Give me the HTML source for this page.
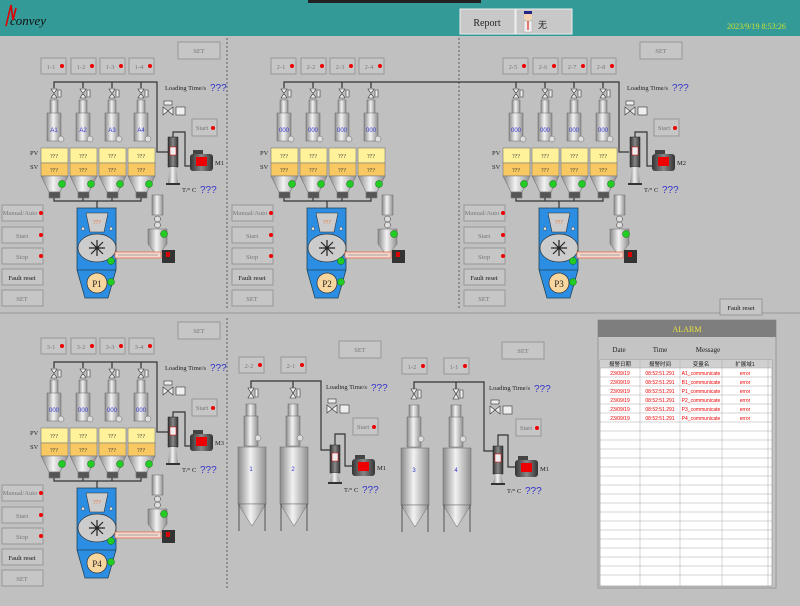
<!DOCTYPE html>
<html><head><meta charset="utf-8"><style>
html,body{margin:0;padding:0;width:800px;height:606px;overflow:hidden;background:#c0c0c0}
svg{display:block}
text{font-family:"Liberation Serif","WenQuanYi Zen Hei",serif}
.b{fill:#c6c6c6;stroke:#8c8c8c;stroke-width:.8}
.bt{font-size:6.5px;fill:#777;text-anchor:middle}
.bk{font-size:6.5px;fill:#111;text-anchor:middle}
.q{font-size:6px;fill:#333;text-anchor:middle}
.qb{font-size:10px;fill:#33c;font-family:"Liberation Sans",sans-serif}
.lbl{font-size:6.5px;fill:#222}
.p{fill:none;stroke:#333;stroke-width:1.2}
.rd{fill:#e00}
.gd{fill:#2c2;stroke:#161;stroke-width:.5}
.gl{fill:url(#g);stroke:#666;stroke-width:.5}
.vl{fill:#eee;stroke:#333;stroke-width:.6}
.ld{font-size:6px;fill:#33c;text-anchor:middle;font-family:"Liberation Sans",sans-serif}
.al{font-size:5px;fill:#e00;text-anchor:middle;font-family:"Liberation Sans Narrow","Liberation Sans",sans-serif}
.ah{font-size:5.5px;fill:#222;text-anchor:middle;font-family:"WenQuanYi Zen Hei",sans-serif}
</style></head><body>
<svg width="800" height="606" viewBox="0 0 800 606" xmlns="http://www.w3.org/2000/svg">
<defs>
<linearGradient id="g" x1="0" x2="1"><stop offset="0" stop-color="#8a8a8a"/><stop offset=".45" stop-color="#f2f2f2"/><stop offset="1" stop-color="#909090"/></linearGradient>
<linearGradient id="gm" x1="0" x2="1"><stop offset="0" stop-color="#333"/><stop offset=".5" stop-color="#888"/><stop offset="1" stop-color="#333"/></linearGradient>
</defs>
<rect width="800" height="606" fill="#c0c0c0"/>
<rect width="800" height="36" fill="#339a98"/>
<rect x="308" y="0" width="173" height="3" fill="#222"/>
<text x="10" y="25" font-size="13" fill="#111" font-family="Liberation Sans,sans-serif" font-style="italic">convey</text>
<path d="M6 26 L11 5 L13 20 L16 8" stroke="#d00" stroke-width="1.6" fill="none"/>
<rect x="460" y="9" width="55" height="25" fill="#c8c8c8" stroke="#eee"/>
<text x="487" y="26" font-size="10" text-anchor="middle" font-family="Liberation Sans,sans-serif" fill="#222">Report</text>
<rect x="516" y="9" width="56" height="25" fill="#c8c8c8" stroke="#eee"/>
<circle cx="528" cy="17" r="4" fill="#f4d4b0"/><rect x="524" y="11" width="8" height="3" fill="#228"/>
<rect x="524" y="21" width="8" height="11" fill="#eee" stroke="#aaa" stroke-width=".5"/><rect x="527.5" y="21" width="1" height="9" fill="#d00"/>
<text x="538" y="28" font-size="9" font-family="WenQuanYi Zen Hei,sans-serif" fill="#222">无</text>
<text x="727" y="29" font-size="8" fill="#cde030" font-family="Liberation Sans,sans-serif">2023/9/19  8:53:26</text>
<path d="M227 38V310M459 38V310M227 318V590" stroke="#444" stroke-width=".8" stroke-dasharray="2,2"/>
<path d="M0 313H800" stroke="#999"/>
<rect class="b" x="720" y="299" width="42" height="16"/><text class="bk" x="741" y="310">Fault reset</text>

<!-- ===== PANEL 1 ===== -->
<g>
<rect class="b" x="178" y="42" width="42" height="17"/><text class="bt" x="199" y="53">SET</text>
<rect class="b" x="41" y="58" width="25" height="16"/><text class="bt" x="51" y="69">1-1</text><circle class="rd" cx="62" cy="66" r="2"/>
<rect class="b" x="71" y="58" width="25" height="16"/><text class="bt" x="81" y="69">1-2</text><circle class="rd" cx="92" cy="66" r="2"/>
<rect class="b" x="100" y="58" width="25" height="16"/><text class="bt" x="110" y="69">1-3</text><circle class="rd" cx="121" cy="66" r="2"/>
<rect class="b" x="129" y="58" width="25" height="16"/><text class="bt" x="139" y="69">1-4</text><circle class="rd" cx="150" cy="66" r="2"/>
<path class="p" d="M54 88V82H157V152H168M83 88V82M112 88V82M141 88V82"/>
<path class="p" d="M173 137V132H185V166H190"/>
<path class="vl" d="M51 89L57 89L51 98L57 98Z M80 89L86 89L80 98L86 98Z M109 89L115 89L109 98L115 98Z M138 89L144 89L138 98L144 98Z"/>
<path class="vl" d="M58 90h3v7h-3z M87 90h3v7h-3z M116 90h3v7h-3z M145 90h3v7h-3z"/>
<rect class="gl" x="50" y="100" width="8" height="14"/><rect class="gl" x="47" y="113" width="14" height="28"/><circle cx="61" cy="139" r="3" fill="#ddd" stroke="#666" stroke-width=".5"/>
<rect class="gl" x="79" y="100" width="8" height="14"/><rect class="gl" x="76" y="113" width="14" height="28"/><circle cx="90" cy="139" r="3" fill="#ddd" stroke="#666" stroke-width=".5"/>
<rect class="gl" x="108" y="100" width="8" height="14"/><rect class="gl" x="105" y="113" width="14" height="28"/><circle cx="119" cy="139" r="3" fill="#ddd" stroke="#666" stroke-width=".5"/>
<rect class="gl" x="137" y="100" width="8" height="14"/><rect class="gl" x="134" y="113" width="14" height="28"/><circle cx="148" cy="139" r="3" fill="#ddd" stroke="#666" stroke-width=".5"/>
<text class="ld" x="54" y="132">A1</text><text class="ld" x="83" y="132">A2</text><text class="ld" x="112" y="132">A3</text><text class="ld" x="141" y="132">A4</text>
<g stroke="#777" stroke-width=".6">
<rect x="41" y="148" width="27" height="15" fill="#fff29a"/><rect x="41" y="163" width="27" height="13" fill="#f8c862"/><path d="M41 176H68L60 192H49Z" fill="url(#g)"/><rect x="49" y="192" width="11" height="6" fill="#555"/>
<rect x="70" y="148" width="27" height="15" fill="#fff29a"/><rect x="70" y="163" width="27" height="13" fill="#f8c862"/><path d="M70 176H97L89 192H78Z" fill="url(#g)"/><rect x="78" y="192" width="11" height="6" fill="#555"/>
<rect x="99" y="148" width="27" height="15" fill="#fff29a"/><rect x="99" y="163" width="27" height="13" fill="#f8c862"/><path d="M99 176H126L118 192H107Z" fill="url(#g)"/><rect x="107" y="192" width="11" height="6" fill="#555"/>
<rect x="128" y="148" width="27" height="15" fill="#fff29a"/><rect x="128" y="163" width="27" height="13" fill="#f8c862"/><path d="M128 176H155L147 192H136Z" fill="url(#g)"/><rect x="136" y="192" width="11" height="6" fill="#555"/>
</g>
<text x="54" y="158" class="q">???</text><text x="54" y="172" class="q">???</text><text x="83" y="158" class="q">???</text><text x="83" y="172" class="q">???</text><text x="112" y="158" class="q">???</text><text x="112" y="172" class="q">???</text><text x="141" y="158" class="q">???</text><text x="141" y="172" class="q">???</text>
<circle class="gd" cx="62" cy="184" r="3.5"/><circle class="gd" cx="91" cy="184" r="3.5"/><circle class="gd" cx="120" cy="184" r="3.5"/><circle class="gd" cx="149" cy="184" r="3.5"/>
<text class="lbl" x="30" y="155">PV</text><text class="lbl" x="30" y="169">SV</text>
<path class="p" d="M54 198V201H141V198M83 201V198M112 201V198M97 201V208"/>
<path d="M77 208H116V270L108 298H85L77 270Z" fill="#2b8ee2" stroke="#245" stroke-width=".8"/>
<path d="M77 270H116" stroke="#245" stroke-width=".8"/>
<path d="M86 213H108L104 232H90Z" fill="#ccc" stroke="#333" stroke-width=".6"/>
<text x="97" y="224" font-size="6" fill="#e87030" text-anchor="middle">???</text>
<path d="M83 226l2 4h-4z M111 226l2 4h-4z" fill="#eee" stroke="#333" stroke-width=".4"/>
<ellipse cx="97" cy="248" rx="19" ry="14" fill="#ccc" stroke="#333" stroke-width=".7"/>
<path d="M97 240V256M89 248H105M91 242L103 254M103 242L91 254" stroke="#222" stroke-width="1.2"/>
<circle cx="97" cy="283" r="10" fill="#f8d6a0" stroke="#333" stroke-width=".7"/>
<text x="97" y="287" font-size="9" text-anchor="middle" fill="#222">P1</text>
<circle class="gd" cx="111" cy="261" r="3.5"/><circle class="gd" cx="111" cy="282" r="3.5"/>
<rect class="gl" x="152" y="195" width="11" height="20"/>
<circle cx="157.5" cy="219" r="3" fill="#ddd" stroke="#333" stroke-width=".5"/><circle cx="157.5" cy="225" r="3" fill="#ddd" stroke="#333" stroke-width=".5"/>
<path class="gl" d="M148 229H167V244L157.5 256L148 244Z"/>
<circle class="gd" cx="164" cy="234" r="3.5"/>
<rect x="115" y="252" width="46" height="6" fill="#f4d8d0" stroke="#e07050" stroke-width=".8"/><path d="M118 255H158" stroke="#666" stroke-width=".6"/>
<rect x="162" y="250" width="13" height="13" fill="#333"/><rect x="166" y="252" width="4" height="5" fill="#d00"/>
<text class="lbl" x="165" y="90">Loading Time/s</text><text class="qb" x="210" y="91">???</text>
<path class="vl" d="M163 107L173 115V107L163 115Z"/><rect class="vl" x="164" y="101" width="8" height="4"/><rect class="vl" x="176" y="107" width="9" height="8"/>
<rect class="b" x="192" y="119" width="25" height="17"/><text class="bt" x="202" y="130">Start</text><circle class="rd" cx="213" cy="128" r="2"/>
<rect x="168" y="137" width="10" height="30" fill="url(#gm)" stroke="#222" stroke-width=".5"/><rect x="170" y="147" width="6" height="8" fill="#eee" stroke="#d00" stroke-width=".5"/>
<path d="M170 167H176L178 183H168Z" fill="url(#g)"/><rect x="166" y="183" width="14" height="2" fill="#333"/>
<rect x="190" y="154" width="23" height="17" rx="3" fill="url(#gm)"/><rect x="196" y="157" width="11" height="9" fill="#e00"/><rect x="193" y="150" width="10" height="4" fill="#444"/>
<text class="lbl" x="215" y="165" font-size="7">M1</text>
<text class="lbl" x="182" y="192">T/° C</text><text class="qb" x="200" y="193">???</text>
<rect class="b" x="2" y="205" width="41" height="16"/><text class="bt" x="20" y="215">Manual/Auto</text><circle class="rd" cx="41" cy="213" r="2"/>
<rect class="b" x="2" y="227" width="41" height="16"/><text class="bt" x="22" y="238">Start</text><circle class="rd" cx="41" cy="235" r="2"/>
<rect class="b" x="2" y="248" width="41" height="16"/><text class="bt" x="22" y="259">Stop</text><circle class="rd" cx="41" cy="256" r="2"/>
<rect class="b" x="2" y="269" width="41" height="16"/><text class="bk" x="22" y="280">Fault reset</text>
<rect class="b" x="2" y="290" width="41" height="16"/><text class="bt" x="22" y="301">SET</text>
</g>

<!-- ===== PANEL 4 ===== -->
<g transform="translate(0,280)">
<rect class="b" x="178" y="42" width="42" height="17"/><text class="bt" x="199" y="53">SET</text>
<rect class="b" x="41" y="58" width="25" height="16"/><text class="bt" x="51" y="69">3-1</text><circle class="rd" cx="62" cy="66" r="2"/>
<rect class="b" x="71" y="58" width="25" height="16"/><text class="bt" x="81" y="69">3-2</text><circle class="rd" cx="92" cy="66" r="2"/>
<rect class="b" x="100" y="58" width="25" height="16"/><text class="bt" x="110" y="69">3-3</text><circle class="rd" cx="121" cy="66" r="2"/>
<rect class="b" x="129" y="58" width="25" height="16"/><text class="bt" x="139" y="69">3-4</text><circle class="rd" cx="150" cy="66" r="2"/>
<path class="p" d="M54 88V82H157V152H168M83 88V82M112 88V82M141 88V82"/>
<path class="p" d="M173 137V132H185V166H190"/>
<path class="vl" d="M51 89L57 89L51 98L57 98Z M80 89L86 89L80 98L86 98Z M109 89L115 89L109 98L115 98Z M138 89L144 89L138 98L144 98Z"/>
<path class="vl" d="M58 90h3v7h-3z M87 90h3v7h-3z M116 90h3v7h-3z M145 90h3v7h-3z"/>
<rect class="gl" x="50" y="100" width="8" height="14"/><rect class="gl" x="47" y="113" width="14" height="28"/><circle cx="61" cy="139" r="3" fill="#ddd" stroke="#666" stroke-width=".5"/>
<rect class="gl" x="79" y="100" width="8" height="14"/><rect class="gl" x="76" y="113" width="14" height="28"/><circle cx="90" cy="139" r="3" fill="#ddd" stroke="#666" stroke-width=".5"/>
<rect class="gl" x="108" y="100" width="8" height="14"/><rect class="gl" x="105" y="113" width="14" height="28"/><circle cx="119" cy="139" r="3" fill="#ddd" stroke="#666" stroke-width=".5"/>
<rect class="gl" x="137" y="100" width="8" height="14"/><rect class="gl" x="134" y="113" width="14" height="28"/><circle cx="148" cy="139" r="3" fill="#ddd" stroke="#666" stroke-width=".5"/>
<text class="ld" x="54" y="132">000</text><text class="ld" x="83" y="132">000</text><text class="ld" x="112" y="132">000</text><text class="ld" x="141" y="132">000</text>
<g stroke="#777" stroke-width=".6">
<rect x="41" y="148" width="27" height="15" fill="#fff29a"/><rect x="41" y="163" width="27" height="13" fill="#f8c862"/><path d="M41 176H68L60 192H49Z" fill="url(#g)"/><rect x="49" y="192" width="11" height="6" fill="#555"/>
<rect x="70" y="148" width="27" height="15" fill="#fff29a"/><rect x="70" y="163" width="27" height="13" fill="#f8c862"/><path d="M70 176H97L89 192H78Z" fill="url(#g)"/><rect x="78" y="192" width="11" height="6" fill="#555"/>
<rect x="99" y="148" width="27" height="15" fill="#fff29a"/><rect x="99" y="163" width="27" height="13" fill="#f8c862"/><path d="M99 176H126L118 192H107Z" fill="url(#g)"/><rect x="107" y="192" width="11" height="6" fill="#555"/>
<rect x="128" y="148" width="27" height="15" fill="#fff29a"/><rect x="128" y="163" width="27" height="13" fill="#f8c862"/><path d="M128 176H155L147 192H136Z" fill="url(#g)"/><rect x="136" y="192" width="11" height="6" fill="#555"/>
</g>
<text x="54" y="158" class="q">???</text><text x="54" y="172" class="q">???</text><text x="83" y="158" class="q">???</text><text x="83" y="172" class="q">???</text><text x="112" y="158" class="q">???</text><text x="112" y="172" class="q">???</text><text x="141" y="158" class="q">???</text><text x="141" y="172" class="q">???</text>
<circle class="gd" cx="62" cy="184" r="3.5"/><circle class="gd" cx="91" cy="184" r="3.5"/><circle class="gd" cx="120" cy="184" r="3.5"/><circle class="gd" cx="149" cy="184" r="3.5"/>
<text class="lbl" x="30" y="155">PV</text><text class="lbl" x="30" y="169">SV</text>
<path class="p" d="M54 198V201H141V198M83 201V198M112 201V198M97 201V208"/>
<path d="M77 208H116V270L108 298H85L77 270Z" fill="#2b8ee2" stroke="#245" stroke-width=".8"/>
<path d="M77 270H116" stroke="#245" stroke-width=".8"/>
<path d="M86 213H108L104 232H90Z" fill="#ccc" stroke="#333" stroke-width=".6"/>
<text x="97" y="224" font-size="6" fill="#e87030" text-anchor="middle">???</text>
<path d="M83 226l2 4h-4z M111 226l2 4h-4z" fill="#eee" stroke="#333" stroke-width=".4"/>
<ellipse cx="97" cy="248" rx="19" ry="14" fill="#ccc" stroke="#333" stroke-width=".7"/>
<path d="M97 240V256M89 248H105M91 242L103 254M103 242L91 254" stroke="#222" stroke-width="1.2"/>
<circle cx="97" cy="283" r="10" fill="#f8d6a0" stroke="#333" stroke-width=".7"/>
<text x="97" y="287" font-size="9" text-anchor="middle" fill="#222">P4</text>
<circle class="gd" cx="111" cy="261" r="3.5"/><circle class="gd" cx="111" cy="282" r="3.5"/>
<rect class="gl" x="152" y="195" width="11" height="20"/>
<circle cx="157.5" cy="219" r="3" fill="#ddd" stroke="#333" stroke-width=".5"/><circle cx="157.5" cy="225" r="3" fill="#ddd" stroke="#333" stroke-width=".5"/>
<path class="gl" d="M148 229H167V244L157.5 256L148 244Z"/>
<circle class="gd" cx="164" cy="234" r="3.5"/>
<rect x="115" y="252" width="46" height="6" fill="#f4d8d0" stroke="#e07050" stroke-width=".8"/><path d="M118 255H158" stroke="#666" stroke-width=".6"/>
<rect x="162" y="250" width="13" height="13" fill="#333"/><rect x="166" y="252" width="4" height="5" fill="#d00"/>
<text class="lbl" x="165" y="90">Loading Time/s</text><text class="qb" x="210" y="91">???</text>
<path class="vl" d="M163 107L173 115V107L163 115Z"/><rect class="vl" x="164" y="101" width="8" height="4"/><rect class="vl" x="176" y="107" width="9" height="8"/>
<rect class="b" x="192" y="119" width="25" height="17"/><text class="bt" x="202" y="130">Start</text><circle class="rd" cx="213" cy="128" r="2"/>
<rect x="168" y="137" width="10" height="30" fill="url(#gm)" stroke="#222" stroke-width=".5"/><rect x="170" y="147" width="6" height="8" fill="#eee" stroke="#d00" stroke-width=".5"/>
<path d="M170 167H176L178 183H168Z" fill="url(#g)"/><rect x="166" y="183" width="14" height="2" fill="#333"/>
<rect x="190" y="154" width="23" height="17" rx="3" fill="url(#gm)"/><rect x="196" y="157" width="11" height="9" fill="#e00"/><rect x="193" y="150" width="10" height="4" fill="#444"/>
<text class="lbl" x="215" y="165" font-size="7">M3</text>
<text class="lbl" x="182" y="192">T/° C</text><text class="qb" x="200" y="193">???</text>
<rect class="b" x="2" y="205" width="41" height="16"/><text class="bt" x="20" y="215">Manual/Auto</text><circle class="rd" cx="41" cy="213" r="2"/>
<rect class="b" x="2" y="227" width="41" height="16"/><text class="bt" x="22" y="238">Start</text><circle class="rd" cx="41" cy="235" r="2"/>
<rect class="b" x="2" y="248" width="41" height="16"/><text class="bt" x="22" y="259">Stop</text><circle class="rd" cx="41" cy="256" r="2"/>
<rect class="b" x="2" y="269" width="41" height="16"/><text class="bk" x="22" y="280">Fault reset</text>
<rect class="b" x="2" y="290" width="41" height="16"/><text class="bt" x="22" y="301">SET</text>
</g>

<path class="p" d="M614 82H619V152H629"/>

<!-- ===== PANEL 2 ===== -->
<g transform="translate(230,0)">
<rect class="b" x="41" y="58" width="25" height="16"/><text class="bt" x="51" y="69">2-1</text><circle class="rd" cx="62" cy="66" r="2"/>
<rect class="b" x="71" y="58" width="25" height="16"/><text class="bt" x="81" y="69">2-2</text><circle class="rd" cx="92" cy="66" r="2"/>
<rect class="b" x="100" y="58" width="25" height="16"/><text class="bt" x="110" y="69">2-3</text><circle class="rd" cx="121" cy="66" r="2"/>
<rect class="b" x="129" y="58" width="25" height="16"/><text class="bt" x="139" y="69">2-4</text><circle class="rd" cx="150" cy="66" r="2"/>
<path class="p" d="M54 88V82H384M83 88V82M112 88V82M141 88V82"/>
<path class="vl" d="M51 89L57 89L51 98L57 98Z M80 89L86 89L80 98L86 98Z M109 89L115 89L109 98L115 98Z M138 89L144 89L138 98L144 98Z"/>
<path class="vl" d="M58 90h3v7h-3z M87 90h3v7h-3z M116 90h3v7h-3z M145 90h3v7h-3z"/>
<rect class="gl" x="50" y="100" width="8" height="14"/><rect class="gl" x="47" y="113" width="14" height="28"/><circle cx="61" cy="139" r="3" fill="#ddd" stroke="#666" stroke-width=".5"/>
<rect class="gl" x="79" y="100" width="8" height="14"/><rect class="gl" x="76" y="113" width="14" height="28"/><circle cx="90" cy="139" r="3" fill="#ddd" stroke="#666" stroke-width=".5"/>
<rect class="gl" x="108" y="100" width="8" height="14"/><rect class="gl" x="105" y="113" width="14" height="28"/><circle cx="119" cy="139" r="3" fill="#ddd" stroke="#666" stroke-width=".5"/>
<rect class="gl" x="137" y="100" width="8" height="14"/><rect class="gl" x="134" y="113" width="14" height="28"/><circle cx="148" cy="139" r="3" fill="#ddd" stroke="#666" stroke-width=".5"/>
<text class="ld" x="54" y="132">000</text><text class="ld" x="83" y="132">000</text><text class="ld" x="112" y="132">000</text><text class="ld" x="141" y="132">000</text>
<g stroke="#777" stroke-width=".6">
<rect x="41" y="148" width="27" height="15" fill="#fff29a"/><rect x="41" y="163" width="27" height="13" fill="#f8c862"/><path d="M41 176H68L60 192H49Z" fill="url(#g)"/><rect x="49" y="192" width="11" height="6" fill="#555"/>
<rect x="70" y="148" width="27" height="15" fill="#fff29a"/><rect x="70" y="163" width="27" height="13" fill="#f8c862"/><path d="M70 176H97L89 192H78Z" fill="url(#g)"/><rect x="78" y="192" width="11" height="6" fill="#555"/>
<rect x="99" y="148" width="27" height="15" fill="#fff29a"/><rect x="99" y="163" width="27" height="13" fill="#f8c862"/><path d="M99 176H126L118 192H107Z" fill="url(#g)"/><rect x="107" y="192" width="11" height="6" fill="#555"/>
<rect x="128" y="148" width="27" height="15" fill="#fff29a"/><rect x="128" y="163" width="27" height="13" fill="#f8c862"/><path d="M128 176H155L147 192H136Z" fill="url(#g)"/><rect x="136" y="192" width="11" height="6" fill="#555"/>
</g>
<text x="54" y="158" class="q">???</text><text x="54" y="172" class="q">???</text><text x="83" y="158" class="q">???</text><text x="83" y="172" class="q">???</text><text x="112" y="158" class="q">???</text><text x="112" y="172" class="q">???</text><text x="141" y="158" class="q">???</text><text x="141" y="172" class="q">???</text>
<circle class="gd" cx="62" cy="184" r="3.5"/><circle class="gd" cx="91" cy="184" r="3.5"/><circle class="gd" cx="120" cy="184" r="3.5"/><circle class="gd" cx="149" cy="184" r="3.5"/>
<text class="lbl" x="30" y="155">PV</text><text class="lbl" x="30" y="169">SV</text>
<path class="p" d="M54 198V201H141V198M83 201V198M112 201V198M97 201V208"/>
<path d="M77 208H116V270L108 298H85L77 270Z" fill="#2b8ee2" stroke="#245" stroke-width=".8"/>
<path d="M77 270H116" stroke="#245" stroke-width=".8"/>
<path d="M86 213H108L104 232H90Z" fill="#ccc" stroke="#333" stroke-width=".6"/>
<text x="97" y="224" font-size="6" fill="#e87030" text-anchor="middle">???</text>
<path d="M83 226l2 4h-4z M111 226l2 4h-4z" fill="#eee" stroke="#333" stroke-width=".4"/>
<ellipse cx="97" cy="248" rx="19" ry="14" fill="#ccc" stroke="#333" stroke-width=".7"/>
<path d="M97 240V256M89 248H105M91 242L103 254M103 242L91 254" stroke="#222" stroke-width="1.2"/>
<circle cx="97" cy="283" r="10" fill="#f8d6a0" stroke="#333" stroke-width=".7"/>
<text x="97" y="287" font-size="9" text-anchor="middle" fill="#222">P2</text>
<circle class="gd" cx="111" cy="261" r="3.5"/><circle class="gd" cx="111" cy="282" r="3.5"/>
<rect class="gl" x="152" y="195" width="11" height="20"/>
<circle cx="157.5" cy="219" r="3" fill="#ddd" stroke="#333" stroke-width=".5"/><circle cx="157.5" cy="225" r="3" fill="#ddd" stroke="#333" stroke-width=".5"/>
<path class="gl" d="M148 229H167V244L157.5 256L148 244Z"/>
<circle class="gd" cx="164" cy="234" r="3.5"/>
<rect x="115" y="252" width="46" height="6" fill="#f4d8d0" stroke="#e07050" stroke-width=".8"/><path d="M118 255H158" stroke="#666" stroke-width=".6"/>
<rect x="162" y="250" width="13" height="13" fill="#333"/><rect x="166" y="252" width="4" height="5" fill="#d00"/>
<rect class="b" x="2" y="205" width="41" height="16"/><text class="bt" x="20" y="215">Manual/Auto</text><circle class="rd" cx="41" cy="213" r="2"/>
<rect class="b" x="2" y="227" width="41" height="16"/><text class="bt" x="22" y="238">Start</text><circle class="rd" cx="41" cy="235" r="2"/>
<rect class="b" x="2" y="248" width="41" height="16"/><text class="bt" x="22" y="259">Stop</text><circle class="rd" cx="41" cy="256" r="2"/>
<rect class="b" x="2" y="269" width="41" height="16"/><text class="bk" x="22" y="280">Fault reset</text>
<rect class="b" x="2" y="290" width="41" height="16"/><text class="bt" x="22" y="301">SET</text>
</g>

<!-- ===== PANEL 3 ===== -->
<g transform="translate(462,0)">
<rect class="b" x="178" y="42" width="42" height="17"/><text class="bt" x="199" y="53">SET</text>
<rect class="b" x="41" y="58" width="25" height="16"/><text class="bt" x="51" y="69">2-5</text><circle class="rd" cx="62" cy="66" r="2"/>
<rect class="b" x="71" y="58" width="25" height="16"/><text class="bt" x="81" y="69">2-6</text><circle class="rd" cx="92" cy="66" r="2"/>
<rect class="b" x="100" y="58" width="25" height="16"/><text class="bt" x="110" y="69">2-7</text><circle class="rd" cx="121" cy="66" r="2"/>
<rect class="b" x="129" y="58" width="25" height="16"/><text class="bt" x="139" y="69">2-8</text><circle class="rd" cx="150" cy="66" r="2"/>
<path class="p" d="M54 88V82M83 88V82M112 88V82M141 88V82"/>
<path class="p" d="M173 137V132H185V166H190"/>
<path class="vl" d="M51 89L57 89L51 98L57 98Z M80 89L86 89L80 98L86 98Z M109 89L115 89L109 98L115 98Z M138 89L144 89L138 98L144 98Z"/>
<path class="vl" d="M58 90h3v7h-3z M87 90h3v7h-3z M116 90h3v7h-3z M145 90h3v7h-3z"/>
<rect class="gl" x="50" y="100" width="8" height="14"/><rect class="gl" x="47" y="113" width="14" height="28"/><circle cx="61" cy="139" r="3" fill="#ddd" stroke="#666" stroke-width=".5"/>
<rect class="gl" x="79" y="100" width="8" height="14"/><rect class="gl" x="76" y="113" width="14" height="28"/><circle cx="90" cy="139" r="3" fill="#ddd" stroke="#666" stroke-width=".5"/>
<rect class="gl" x="108" y="100" width="8" height="14"/><rect class="gl" x="105" y="113" width="14" height="28"/><circle cx="119" cy="139" r="3" fill="#ddd" stroke="#666" stroke-width=".5"/>
<rect class="gl" x="137" y="100" width="8" height="14"/><rect class="gl" x="134" y="113" width="14" height="28"/><circle cx="148" cy="139" r="3" fill="#ddd" stroke="#666" stroke-width=".5"/>
<text class="ld" x="54" y="132">000</text><text class="ld" x="83" y="132">000</text><text class="ld" x="112" y="132">000</text><text class="ld" x="141" y="132">000</text>
<g stroke="#777" stroke-width=".6">
<rect x="41" y="148" width="27" height="15" fill="#fff29a"/><rect x="41" y="163" width="27" height="13" fill="#f8c862"/><path d="M41 176H68L60 192H49Z" fill="url(#g)"/><rect x="49" y="192" width="11" height="6" fill="#555"/>
<rect x="70" y="148" width="27" height="15" fill="#fff29a"/><rect x="70" y="163" width="27" height="13" fill="#f8c862"/><path d="M70 176H97L89 192H78Z" fill="url(#g)"/><rect x="78" y="192" width="11" height="6" fill="#555"/>
<rect x="99" y="148" width="27" height="15" fill="#fff29a"/><rect x="99" y="163" width="27" height="13" fill="#f8c862"/><path d="M99 176H126L118 192H107Z" fill="url(#g)"/><rect x="107" y="192" width="11" height="6" fill="#555"/>
<rect x="128" y="148" width="27" height="15" fill="#fff29a"/><rect x="128" y="163" width="27" height="13" fill="#f8c862"/><path d="M128 176H155L147 192H136Z" fill="url(#g)"/><rect x="136" y="192" width="11" height="6" fill="#555"/>
</g>
<text x="54" y="158" class="q">???</text><text x="54" y="172" class="q">???</text><text x="83" y="158" class="q">???</text><text x="83" y="172" class="q">???</text><text x="112" y="158" class="q">???</text><text x="112" y="172" class="q">???</text><text x="141" y="158" class="q">???</text><text x="141" y="172" class="q">???</text>
<circle class="gd" cx="62" cy="184" r="3.5"/><circle class="gd" cx="91" cy="184" r="3.5"/><circle class="gd" cx="120" cy="184" r="3.5"/><circle class="gd" cx="149" cy="184" r="3.5"/>
<text class="lbl" x="30" y="155">PV</text><text class="lbl" x="30" y="169">SV</text>
<path class="p" d="M54 198V201H141V198M83 201V198M112 201V198M97 201V208"/>
<path d="M77 208H116V270L108 298H85L77 270Z" fill="#2b8ee2" stroke="#245" stroke-width=".8"/>
<path d="M77 270H116" stroke="#245" stroke-width=".8"/>
<path d="M86 213H108L104 232H90Z" fill="#ccc" stroke="#333" stroke-width=".6"/>
<text x="97" y="224" font-size="6" fill="#e87030" text-anchor="middle">???</text>
<path d="M83 226l2 4h-4z M111 226l2 4h-4z" fill="#eee" stroke="#333" stroke-width=".4"/>
<ellipse cx="97" cy="248" rx="19" ry="14" fill="#ccc" stroke="#333" stroke-width=".7"/>
<path d="M97 240V256M89 248H105M91 242L103 254M103 242L91 254" stroke="#222" stroke-width="1.2"/>
<circle cx="97" cy="283" r="10" fill="#f8d6a0" stroke="#333" stroke-width=".7"/>
<text x="97" y="287" font-size="9" text-anchor="middle" fill="#222">P3</text>
<circle class="gd" cx="111" cy="261" r="3.5"/><circle class="gd" cx="111" cy="282" r="3.5"/>
<rect class="gl" x="152" y="195" width="11" height="20"/>
<circle cx="157.5" cy="219" r="3" fill="#ddd" stroke="#333" stroke-width=".5"/><circle cx="157.5" cy="225" r="3" fill="#ddd" stroke="#333" stroke-width=".5"/>
<path class="gl" d="M148 229H167V244L157.5 256L148 244Z"/>
<circle class="gd" cx="164" cy="234" r="3.5"/>
<rect x="115" y="252" width="46" height="6" fill="#f4d8d0" stroke="#e07050" stroke-width=".8"/><path d="M118 255H158" stroke="#666" stroke-width=".6"/>
<rect x="162" y="250" width="13" height="13" fill="#333"/><rect x="166" y="252" width="4" height="5" fill="#d00"/>
<text class="lbl" x="165" y="90">Loading Time/s</text><text class="qb" x="210" y="91">???</text>
<path class="vl" d="M163 107L173 115V107L163 115Z"/><rect class="vl" x="164" y="101" width="8" height="4"/><rect class="vl" x="176" y="107" width="9" height="8"/>
<rect class="b" x="192" y="119" width="25" height="17"/><text class="bt" x="202" y="130">Start</text><circle class="rd" cx="213" cy="128" r="2"/>
<rect x="168" y="137" width="10" height="30" fill="url(#gm)" stroke="#222" stroke-width=".5"/><rect x="170" y="147" width="6" height="8" fill="#eee" stroke="#d00" stroke-width=".5"/>
<path d="M170 167H176L178 183H168Z" fill="url(#g)"/><rect x="166" y="183" width="14" height="2" fill="#333"/>
<rect x="190" y="154" width="23" height="17" rx="3" fill="url(#gm)"/><rect x="196" y="157" width="11" height="9" fill="#e00"/><rect x="193" y="150" width="10" height="4" fill="#444"/>
<text class="lbl" x="215" y="165" font-size="7">M2</text>
<text class="lbl" x="182" y="192">T/° C</text><text class="qb" x="200" y="193">???</text>
<rect class="b" x="2" y="205" width="41" height="16"/><text class="bt" x="20" y="215">Manual/Auto</text><circle class="rd" cx="41" cy="213" r="2"/>
<rect class="b" x="2" y="227" width="41" height="16"/><text class="bt" x="22" y="238">Start</text><circle class="rd" cx="41" cy="235" r="2"/>
<rect class="b" x="2" y="248" width="41" height="16"/><text class="bt" x="22" y="259">Stop</text><circle class="rd" cx="41" cy="256" r="2"/>
<rect class="b" x="2" y="269" width="41" height="16"/><text class="bk" x="22" y="280">Fault reset</text>
<rect class="b" x="2" y="290" width="41" height="16"/><text class="bt" x="22" y="301">SET</text>
</g>

<!-- ===== SILO GROUP A ===== -->
<g>
<rect class="b" x="339" y="341" width="42" height="17"/><text class="bt" x="360" y="352">SET</text>
<rect class="b" x="239" y="357" width="25" height="16"/><text class="bt" x="249" y="368">2-2</text><circle class="rd" cx="260" cy="365" r="2"/>
<rect class="b" x="281" y="357" width="25" height="16"/><text class="bt" x="291" y="368">2-1</text><circle class="rd" cx="302" cy="365" r="2"/>
<path class="p" d="M251 388V381H321V450H330M293 388V381"/>
<path class="p" d="M335 445V434H345V466H352"/>
<path class="vl" d="M248 388L254 388L248 398L254 398Z M290 388L296 388L290 398L296 398Z"/>
<path class="vl" d="M255 389h3v8h-3z M297 389h3v8h-3z"/>
<rect class="gl" x="246" y="404" width="10" height="13"/><rect class="gl" x="244" y="416" width="14" height="30"/><circle cx="258" cy="438" r="3" fill="#ddd" stroke="#666" stroke-width=".5"/>
<rect class="gl" x="288" y="404" width="10" height="13"/><rect class="gl" x="286" y="416" width="14" height="30"/><circle cx="300" cy="438" r="3" fill="#ddd" stroke="#666" stroke-width=".5"/>
<rect class="gl" x="238" y="447" width="28" height="57"/><path class="gl" d="M238 504H266L252 526Z"/>
<rect class="gl" x="280" y="447" width="28" height="57"/><path class="gl" d="M280 504H308L294 526Z"/>
<path d="M239 504V531M265 504V531M281 504V531M307 504V531" stroke="#555" stroke-width="1"/>
<text class="ld" x="251" y="471">1</text><text class="ld" x="293" y="471">2</text>
<text class="lbl" x="326" y="389">Loading Time/s</text><text class="qb" x="371" y="391">???</text>
<path class="vl" d="M327 405L337 413V405L327 413Z"/><rect class="vl" x="328" y="399" width="8" height="4"/><rect class="vl" x="340" y="405" width="9" height="8"/>
<rect class="b" x="353" y="418" width="25" height="17"/><text class="bt" x="363" y="429">Start</text><circle class="rd" cx="374" cy="427" r="2"/>
<rect x="330" y="445" width="10" height="28" fill="url(#gm)" stroke="#222" stroke-width=".5"/><rect x="332" y="453" width="6" height="8" fill="#eee" stroke="#d00" stroke-width=".5"/>
<path d="M332 473H338L340 482H330Z" fill="url(#g)"/><rect x="328" y="482" width="14" height="2" fill="#333"/>
<rect x="352" y="459" width="23" height="17" rx="3" fill="url(#gm)"/><rect x="358" y="462" width="11" height="9" fill="#e00"/><rect x="355" y="455" width="10" height="4" fill="#444"/>
<text class="lbl" x="377" y="470" font-size="7">M1</text>
<text class="lbl" x="344" y="492">T/° C</text><text class="qb" x="362" y="493">???</text>
</g>
<!-- ===== SILO GROUP B ===== -->
<g transform="translate(163,1)">
<rect class="b" x="339" y="341" width="42" height="17"/><text class="bt" x="360" y="352">SET</text>
<rect class="b" x="239" y="357" width="25" height="16"/><text class="bt" x="249" y="368">1-2</text><circle class="rd" cx="260" cy="365" r="2"/>
<rect class="b" x="281" y="357" width="25" height="16"/><text class="bt" x="291" y="368">1-1</text><circle class="rd" cx="302" cy="365" r="2"/>
<path class="p" d="M251 388V381H321V450H330M293 388V381"/>
<path class="p" d="M335 445V434H345V466H352"/>
<path class="vl" d="M248 388L254 388L248 398L254 398Z M290 388L296 388L290 398L296 398Z"/>
<path class="vl" d="M255 389h3v8h-3z M297 389h3v8h-3z"/>
<rect class="gl" x="246" y="404" width="10" height="13"/><rect class="gl" x="244" y="416" width="14" height="30"/><circle cx="258" cy="438" r="3" fill="#ddd" stroke="#666" stroke-width=".5"/>
<rect class="gl" x="288" y="404" width="10" height="13"/><rect class="gl" x="286" y="416" width="14" height="30"/><circle cx="300" cy="438" r="3" fill="#ddd" stroke="#666" stroke-width=".5"/>
<rect class="gl" x="238" y="447" width="28" height="57"/><path class="gl" d="M238 504H266L252 526Z"/>
<rect class="gl" x="280" y="447" width="28" height="57"/><path class="gl" d="M280 504H308L294 526Z"/>
<path d="M239 504V531M265 504V531M281 504V531M307 504V531" stroke="#555" stroke-width="1"/>
<text class="ld" x="251" y="471">3</text><text class="ld" x="293" y="471">4</text>
<text class="lbl" x="326" y="389">Loading Time/s</text><text class="qb" x="371" y="391">???</text>
<path class="vl" d="M327 405L337 413V405L327 413Z"/><rect class="vl" x="328" y="399" width="8" height="4"/><rect class="vl" x="340" y="405" width="9" height="8"/>
<rect class="b" x="353" y="418" width="25" height="17"/><text class="bt" x="363" y="429">Start</text><circle class="rd" cx="374" cy="427" r="2"/>
<rect x="330" y="445" width="10" height="28" fill="url(#gm)" stroke="#222" stroke-width=".5"/><rect x="332" y="453" width="6" height="8" fill="#eee" stroke="#d00" stroke-width=".5"/>
<path d="M332 473H338L340 482H330Z" fill="url(#g)"/><rect x="328" y="482" width="14" height="2" fill="#333"/>
<rect x="352" y="459" width="23" height="17" rx="3" fill="url(#gm)"/><rect x="358" y="462" width="11" height="9" fill="#e00"/><rect x="355" y="455" width="10" height="4" fill="#444"/>
<text class="lbl" x="377" y="470" font-size="7">M1</text>
<text class="lbl" x="344" y="492">T/° C</text><text class="qb" x="362" y="493">???</text>
</g>

<!-- ===== ALARM ===== -->
<rect x="598" y="320" width="178" height="268" fill="#c4c4c4" stroke="#999"/>
<rect x="598" y="320" width="178" height="17" fill="#7e7e7e"/>
<text x="687" y="332" font-size="8" fill="#e8e040" text-anchor="middle">ALARM</text>
<text x="619" y="352" font-size="7" fill="#222" text-anchor="middle">Date</text>
<text x="660" y="352" font-size="7" fill="#222" text-anchor="middle">Time</text>
<text x="708" y="352" font-size="7" fill="#222" text-anchor="middle">Message</text>
<rect x="600" y="360" width="172" height="226" fill="#fff" stroke="#888" stroke-width=".6"/>
<rect x="600" y="360" width="172" height="8" fill="#d0d0d0"/>
<g stroke="#aaa" stroke-width=".5">
<path d="M640 360V586M680 360V586M722 360V586M768 360V586"/>
<path d="M600 368H772M600 377H772M600 386H772M600 395H772M600 404H772M600 413H772M600 422H772M600 431H772M600 440H772M600 449H772M600 458H772M600 467H772M600 476H772M600 485H772M600 494H772M600 503H772M600 512H772M600 521H772M600 530H772M600 539H772M600 548H772M600 557H772M600 566H772M600 575H772"/>
</g>
<text class="ah" x="620" y="366">报警日期</text><text class="ah" x="660" y="366">报警时间</text><text class="ah" x="701" y="366">变量名</text><text class="ah" x="745" y="366">扩展域1</text>
<text class="al" x="620" y="375">23/09/19</text><text class="al" x="660" y="375">08:52:51.291</text><text class="al" x="701" y="375">A1_communicate</text><text class="al" x="745" y="375">error</text>
<text class="al" x="620" y="384">23/09/19</text><text class="al" x="660" y="384">08:52:51.291</text><text class="al" x="701" y="384">B1_communicate</text><text class="al" x="745" y="384">error</text>
<text class="al" x="620" y="393">23/09/19</text><text class="al" x="660" y="393">08:52:51.291</text><text class="al" x="701" y="393">P1_communicate</text><text class="al" x="745" y="393">error</text>
<text class="al" x="620" y="402">23/09/19</text><text class="al" x="660" y="402">08:52:51.291</text><text class="al" x="701" y="402">P2_communicate</text><text class="al" x="745" y="402">error</text>
<text class="al" x="620" y="411">23/09/19</text><text class="al" x="660" y="411">08:52:51.291</text><text class="al" x="701" y="411">P3_communicate</text><text class="al" x="745" y="411">error</text>
<text class="al" x="620" y="420">23/09/19</text><text class="al" x="660" y="420">08:52:51.291</text><text class="al" x="701" y="420">P4_communicate</text><text class="al" x="745" y="420">error</text>
</svg>
</body></html>
